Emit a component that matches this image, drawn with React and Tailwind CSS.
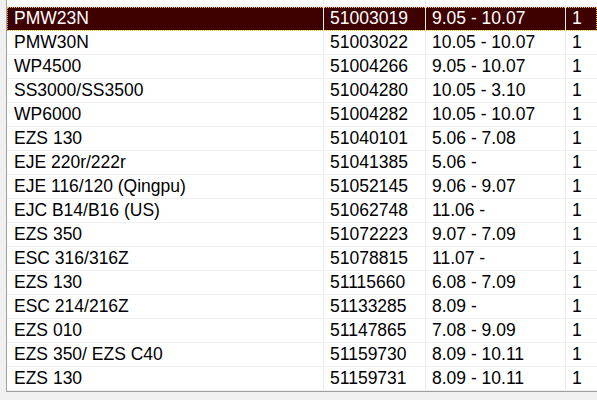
import React from "react";

const rows = [
  ["PMW 110/131", "51003011", "10.05 - 3.11", "1"],
  ["PMW23N", "51003019", "9.05 - 10.07", "1"],
  ["PMW30N", "51003022", "10.05 - 10.07", "1"],
  ["WP4500", "51004266", "9.05 - 10.07", "1"],
  ["SS3000/SS3500", "51004280", "10.05 - 3.10", "1"],
  ["WP6000", "51004282", "10.05 - 10.07", "1"],
  ["EZS 130", "51040101", "5.06 - 7.08", "1"],
  ["EJE 220r/222r", "51041385", "5.06 -", "1"],
  ["EJE 116/120 (Qingpu)", "51052145", "9.06 - 9.07", "1"],
  ["EJC B14/B16 (US)", "51062748", "11.06 -", "1"],
  ["EZS 350", "51072223", "9.07 - 7.09", "1"],
  ["ESC 316/316Z", "51078815", "11.07 -", "1"],
  ["EZS 130", "51115660", "6.08 - 7.09", "1"],
  ["ESC 214/216Z", "51133285", "8.09 -", "1"],
  ["EZS 010", "51147865", "7.08 - 9.09", "1"],
  ["EZS 350/ EZS C40", "51159730", "8.09 - 10.11", "1"],
  ["EZS 130", "51159731", "8.09 - 10.11", "1"],
];

export default function App() {
  return (
    <div
      className="w-[597px] h-[400px] bg-[#f0f0f0] overflow-hidden pl-[6px]"
      style={{ fontFamily: '"Liberation Sans", Arial, sans-serif' }}
    >
      <div className="h-[392px] bg-white border-l border-b border-[#a0a0a0] overflow-hidden">
        <div className="-mt-[17px] text-[17.5px] leading-none">
          {rows.map((r, i) => {
            const sel = i === 1;
            return (
              <div
                key={i}
                className={
                  "flex h-[24px] border-b border-[#f0f0f0] " +
                  (sel
                    ? "bg-[#3f0000] text-white outline-1 outline-dotted outline-[#e8c840] -outline-offset-1"
                    : "text-black")
                }
              >
                <div className="w-[317px] shrink-0 flex items-center pl-[7px] border-r border-[#ececec] whitespace-nowrap">
                  {r[0]}
                </div>
                <div className="w-[102px] shrink-0 flex items-center pl-[6px] border-r border-[#ececec] whitespace-nowrap">
                  {r[1]}
                </div>
                <div className="w-[140px] shrink-0 flex items-center pl-[6px] border-r border-[#ececec] whitespace-nowrap">
                  {r[2]}
                </div>
                <div className="flex-1 flex items-center pl-[6px] whitespace-nowrap">
                  {r[3]}
                </div>
              </div>
            );
          })}
        </div>
      </div>
    </div>
  );
}
